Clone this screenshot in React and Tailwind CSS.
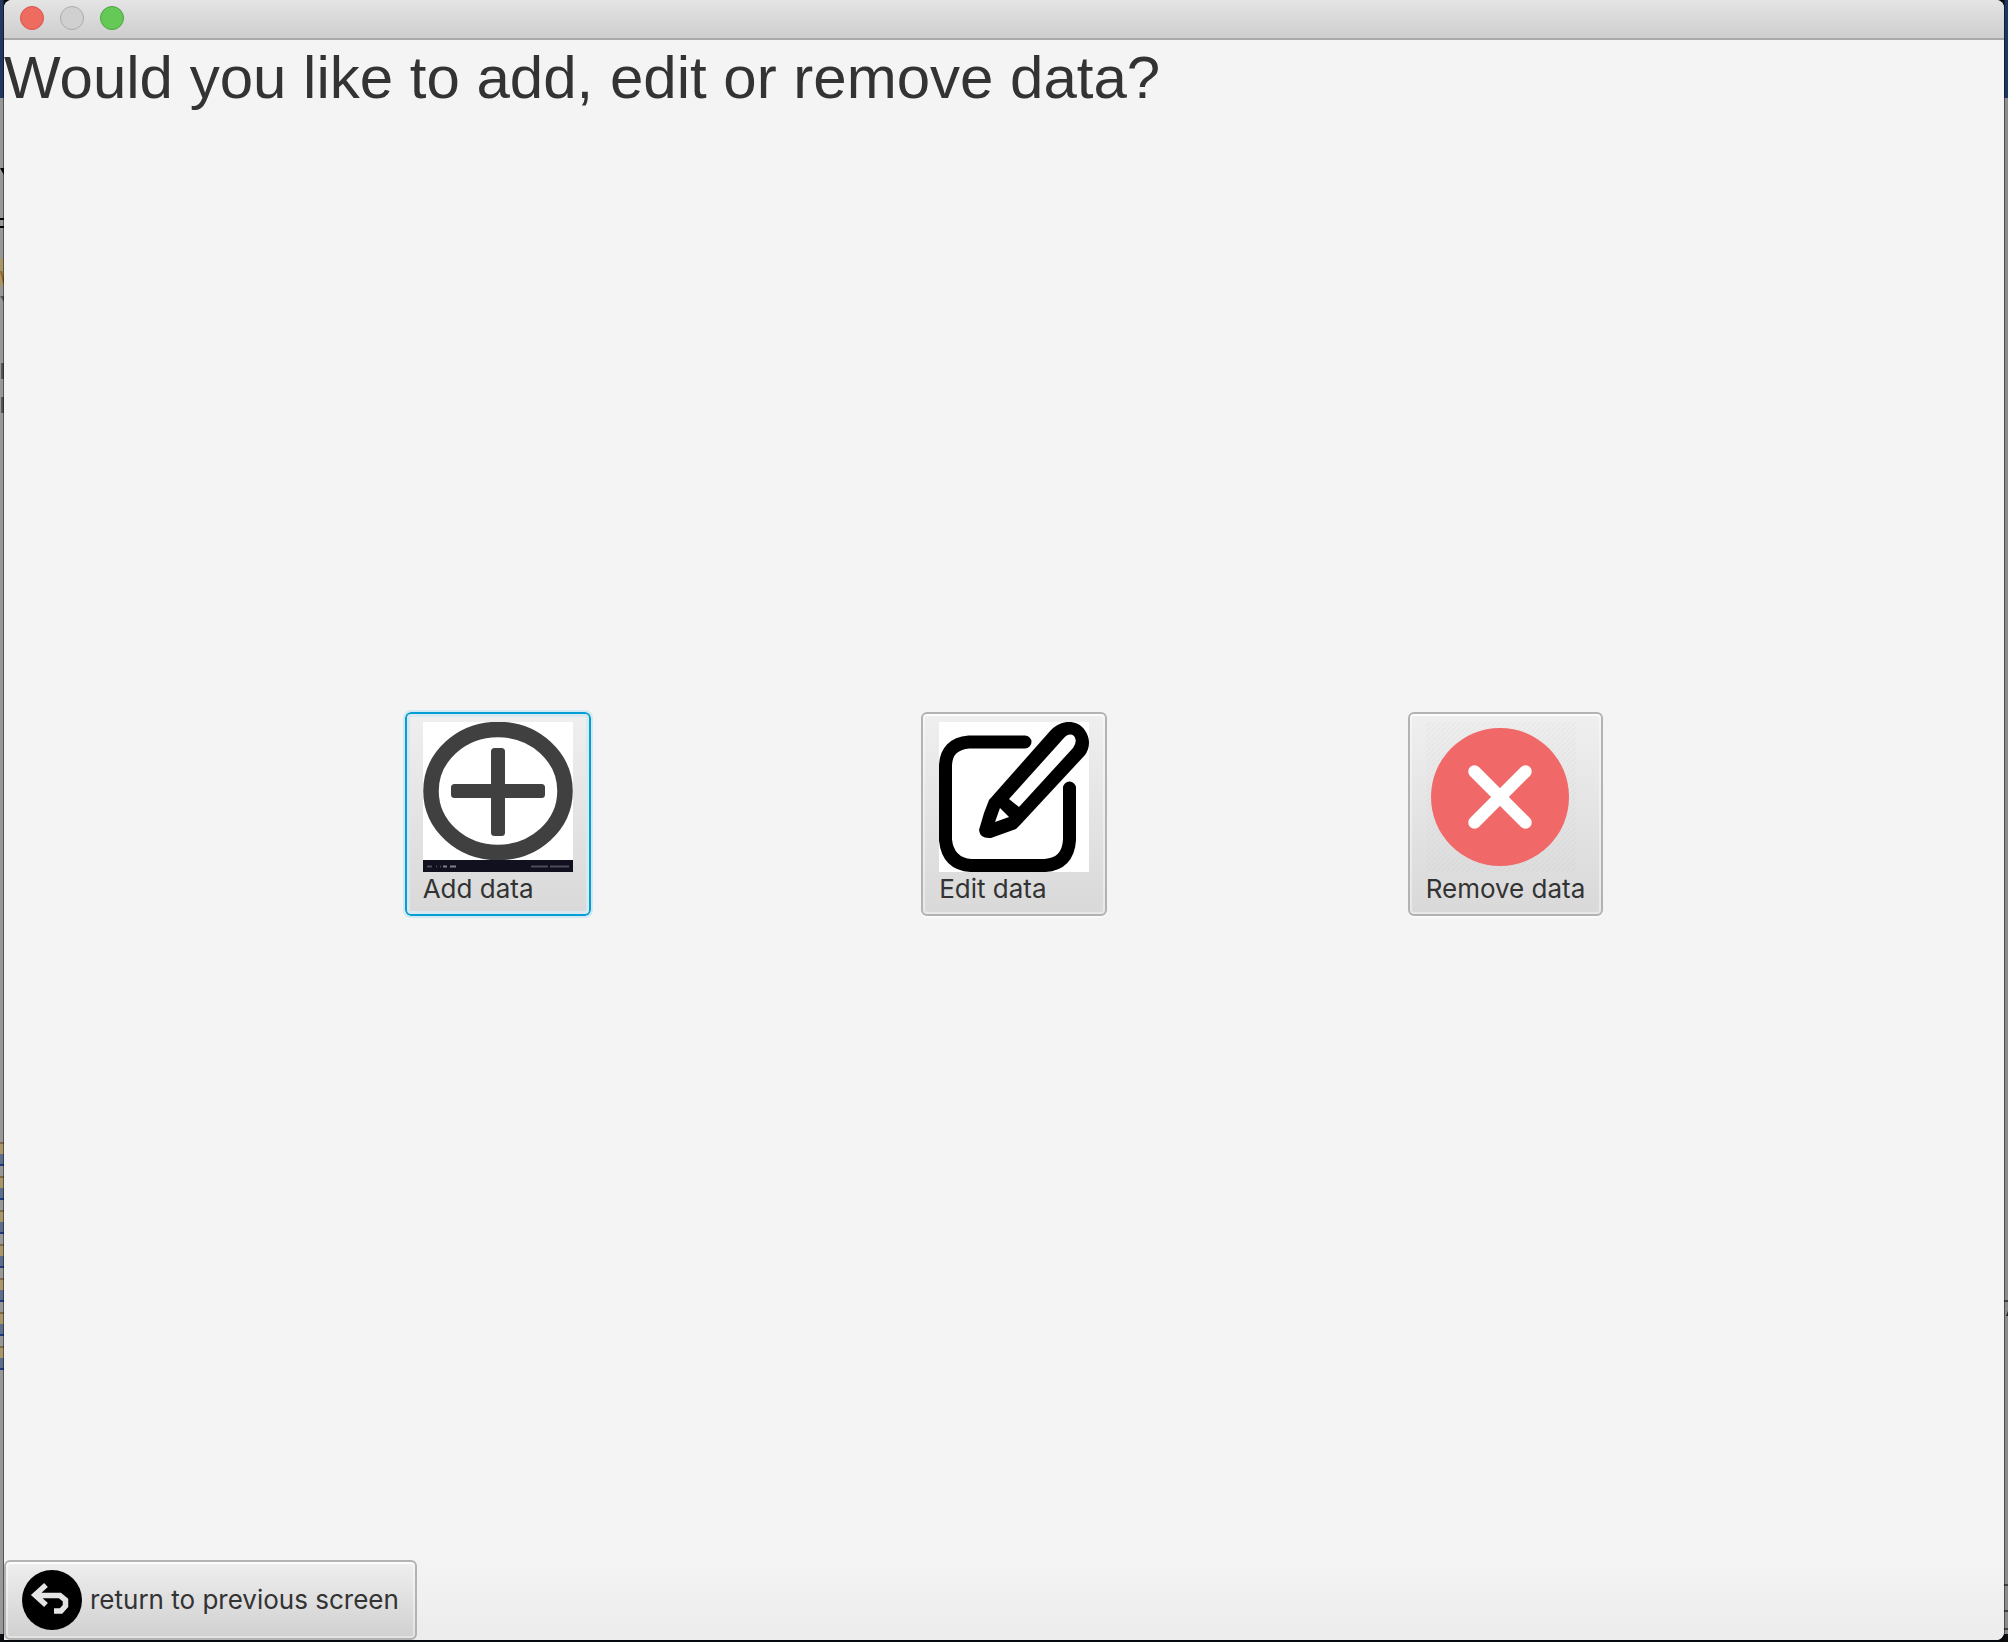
const tileBase =
  'flex flex-col items-start rounded-md border-2 px-4 pt-2 pb-2 text-[26px] leading-[34px] text-[#333333] bg-linear-to-b from-[#efefef] to-[#d9d9d9]';
const tileIdle = 'border-[#b3b3b3] shadow-[inset_0_2px_0_#fcfcfc,inset_0_0_0_2px_rgba(255,255,255,0.4),0_2px_0_#fafafa]';
const tileFocus = 'border-[#039ed3] outline-2 outline-[#d3e9f2] shadow-[inset_0_0_0_3px_#d9e9ef]';

function AddIcon() {
  return (
    <svg className="block size-[150px]" viewBox="0 0 150 150" aria-hidden="true">
      <rect width="150" height="150" fill="#fff" />
      <ellipse cx="75" cy="69" rx="67" ry="61.5" fill="none" stroke="#404040" strokeWidth="15.5" />
      <rect x="68" y="26" width="14" height="88" rx="3.5" fill="#404040" />
      <rect x="28" y="62" width="94" height="14" rx="3.5" fill="#404040" />
      <rect y="138" width="150" height="12" fill="#10101f" />
      <path d="M4 144.500h5M13 144.500h1M17 144.500h1" stroke="#4c4c5c" strokeWidth="2" />
      <path d="M20 144.500h4M27 144.500h6" stroke="#80808c" strokeWidth="2" />
      <path d="M108 144.500h17M127 144.500h19" stroke="#4c4c5c" strokeWidth="2" />
    </svg>
  );
}

function EditIcon() {
  return (
    <svg className="block size-[150px]" viewBox="0 0 150 150" aria-hidden="true">
      <rect width="150" height="150" fill="#fff" />
      <path
        d="M86 20H30Q7 22 6.500 44V118Q9 142 32 143.500H106Q129 142 130.500 118V66"
        fill="none"
        stroke="#000"
        strokeWidth="13"
        strokeLinecap="round"
      />
      <path
        d="M50 78L112 8C123 -3 138 -2 145 7C152 16 151 26 146 33L81 103L77 107L52 116Q41 117 40 108L45 91Z"
        fill="#000"
      />
      <path d="M70 77L124 17Q130 10 135 14Q139 19 134 26L80 85Z" fill="#fff" />
      <path d="M61 86L70 95L56 100Z" fill="#fff" />
    </svg>
  );
}

function RemoveIcon() {
  return (
    <svg className="block size-[150px]" viewBox="0 0 150 150" aria-hidden="true">
      <defs>
        <pattern id="hatch" width="5" height="5" patternUnits="userSpaceOnUse">
          <path d="M-1 6L6 -1" stroke="#000" strokeOpacity="0.025" strokeWidth="1.500" />
        </pattern>
      </defs>
      <rect width="150" height="150" fill="url(#hatch)" />
      <circle cx="74" cy="75" r="69" fill="#f06868" />
      <path d="M48.500 49.500L99.500 100.500M99.500 49.500L48.500 100.500" stroke="#fff" strokeWidth="12.500" strokeLinecap="round" />
    </svg>
  );
}

function ReturnIcon() {
  return (
    <svg className="block size-[60px]" viewBox="0 0 60 60" aria-hidden="true">
      <circle cx="30" cy="30" r="30" fill="#000" />
      <path
        d="M24 15L13 25L24 35M14 25.500H38L43.500 30V36L39 41H32"
        fill="none"
        stroke="#e4e4e4"
        strokeWidth="5.500"
      />
    </svg>
  );
}

const tanRows = [1142, 1176, 1210, 1244, 1278, 1312, 1346];

function LeftBackdrop() {
  return (
    <svg className="block h-full w-1 shrink-0" viewBox="0 0 4 1642" preserveAspectRatio="none" aria-hidden="true">
      <rect width="4" height="1642" fill="#989898" />
      <rect width="4" height="98" fill="#24385f" />
      <path d="M0 168H4V175Z" fill="#000" />
      <path d="M0 219H4M0 227H4" stroke="#000" strokeWidth="2" />
      <rect y="258" width="4" height="28" fill="#a8976a" />
      <path d="M1 271L4 283" stroke="#9a6420" strokeWidth="2" />
      <path d="M0 296H4V302Z" fill="#555" />
      <rect x="1" y="363" width="3" height="16" fill="#555" />
      <rect x="1" y="397" width="3" height="16" fill="#555" />
      {tanRows.map((y) => (
        <g key={y}>
          <rect y={y} width="4" height="2" fill="#806a4c" />
          <rect y={y + 2} width="4" height="10" fill="#a8976a" />
          <rect y={y + 12} width="4" height="10" fill="#5d6f8c" />
          <rect y={y + 22} width="4" height="2" fill="#21397e" />
        </g>
      ))}
      <rect y="1634" width="4" height="8" fill="#0a0d12" />
      <rect x="3" width="1" height="1642" fill="#000" fillOpacity="0.45" />
    </svg>
  );
}

function RightBackdrop() {
  return (
    <svg className="block h-full w-1 shrink-0" viewBox="0 0 4 1642" preserveAspectRatio="none" aria-hidden="true">
      <rect width="4" height="1642" fill="#8c8c8c" />
      <rect width="4" height="98" fill="#1c3564" />
      <path d="M0 1301H4M0 1585H4M0 1611H4M0 1629H4" stroke="#444" strokeWidth="2" />
      <path d="M4 1311V1316H2Z" fill="#222" />
      <rect y="1634" width="4" height="8" fill="#0a0d12" />
      <rect width="1" height="1642" fill="#000" fillOpacity="0.45" />
    </svg>
  );
}

export default function App() {
  return (
    <div className="flex h-screen bg-[#06090e] font-['Inter',sans-serif]">
      <LeftBackdrop />
      <div className="mb-0.5 flex min-w-0 flex-1 flex-col overflow-hidden rounded-t-lg rounded-br-lg bg-[#f4f4f4]">
        <header className="flex h-10 shrink-0 items-start gap-4 border-b-2 border-[#a9a9a9] bg-linear-to-b from-[#e4e4e4] to-[#cecece] px-4 pt-1.5">
          <button type="button" aria-label="Close" className="size-6 rounded-full border border-[#d9544a] bg-[#ee6b60]" />
          <button type="button" aria-label="Minimize" className="size-6 rounded-full border border-[#ababab] bg-[#d0d0d0]" />
          <button type="button" aria-label="Zoom" className="size-6 rounded-full border border-[#4ba53c] bg-[#64c956]" />
        </header>
        <main className="flex flex-1 flex-col">
          <h1 className="font-['Liberation_Sans',sans-serif] text-[60px] leading-[76px] text-[#333333]">
            Would you like to add, edit or remove data?
          </h1>
          <div className="grid flex-1 grid-cols-[400fr_auto_330fr_auto_300fr_auto_400fr] items-center pb-12">
            <button type="button" className={`${tileBase} ${tileFocus} col-start-2`}>
              <AddIcon />
              Add data
            </button>
            <button type="button" className={`${tileBase} ${tileIdle} col-start-4`}>
              <EditIcon />
              Edit data
            </button>
            <button type="button" className={`${tileBase} ${tileIdle} col-start-6`}>
              <RemoveIcon />
              Remove data
            </button>
          </div>
          <footer className="flex bg-linear-to-b from-[#f4f4f4] to-[#ececec]">
            <button
              type="button"
              className="flex items-center gap-2 rounded-md border-2 border-[#b3b3b3] bg-linear-to-b from-[#efefef] to-[#d0d0d0] px-4 py-2 text-[26px] leading-[34px] text-[#333333] shadow-[inset_0_2px_0_#fcfcfc,inset_0_0_0_2px_rgba(255,255,255,0.4)]"
            >
              <ReturnIcon />
              return to previous screen
            </button>
          </footer>
        </main>
      </div>
      <RightBackdrop />
    </div>
  );
}
